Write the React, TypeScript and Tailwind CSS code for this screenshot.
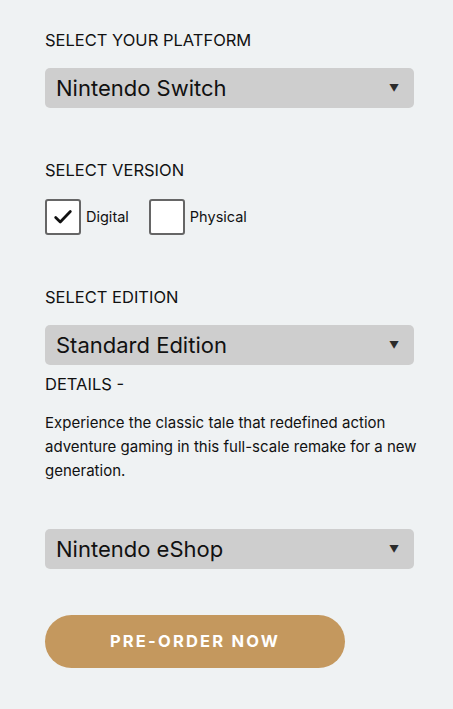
const Caret = () => (
    <span className="text-[10px] leading-none text-[#2b2b2b]">▼</span>
);

const SelectBox = ({ value }: { value: string }) => (
    <div className="flex h-[40px] w-[369px] items-center justify-between rounded-[5px] bg-[#cecece] pl-[11px] pr-[15px]">
        <span className="text-[22px] leading-none text-[#111]">{value}</span>
        <Caret />
    </div>
);

const CheckBox = ({ checked, label }: { checked?: boolean; label: string }) => (
    <div className="flex items-center gap-[5px]">
        <div className="flex h-[36px] w-[36px] items-center justify-center rounded-[3px] border-2 border-[#666] bg-white">
            {checked && (
                <svg width="22" height="22" viewBox="0 0 24 24" fill="none" stroke="#111" strokeWidth="3" strokeLinecap="round" strokeLinejoin="round">
                    <path d="M4 12.5l5 5L20 6" />
                </svg>
            )}
        </div>
        <span className="text-[14.5px] text-[#111]">{label}</span>
    </div>
);

export default function App() {
    return (
        <div className="min-h-[709px] w-full bg-[#eff2f3] px-[45px] pt-[30px] font-['Inter',sans-serif] text-[#111]">
            <div className="flex flex-col items-start">
                <div className="text-[16.5px] leading-[20px]">SELECT YOUR PLATFORM</div>
                <div className="mt-[18px]">
                    <SelectBox value="Nintendo Switch" />
                </div>

                <div className="mt-[52px] text-[16.5px] leading-[20px]">SELECT VERSION</div>
                <div className="mt-[19px] flex gap-[20px]">
                    <CheckBox checked label="Digital" />
                    <CheckBox label="Physical" />
                </div>

                <div className="mt-[52px] text-[16.5px] leading-[20px]">SELECT EDITION</div>
                <div className="mt-[18px]">
                    <SelectBox value="Standard Edition" />
                </div>

                <div className="mt-[9px] text-[16.5px] leading-[20px]">DETAILS -</div>
                <p className="mt-[17px] w-[382px] text-[15px] leading-[24px]">
                    Experience the classic tale that redefined action adventure gaming in this full-scale remake for a new generation.
                </p>

                <div className="mt-[46px]">
                    <SelectBox value="Nintendo eShop" />
                </div>

                <button className="mt-[46px] flex h-[53px] w-[300px] items-center justify-center rounded-full bg-[#c4985e] text-[16.5px] font-bold tracking-[2.2px] text-white">
                    PRE-ORDER NOW
                </button>
            </div>
        </div>
    );
}
